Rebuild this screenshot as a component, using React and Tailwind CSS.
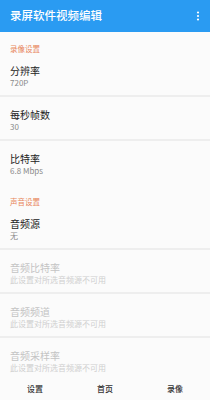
import React from "react";

const font = { fontFamily: '"Noto Sans CJK SC", "Noto Sans", sans-serif' };

function Item({ title, sub, disabled, divider = true }) {
  return (
    <div className={`h-[44px] shrink-0 px-[10px] pt-[11px] ${divider ? "border-b-2 border-[#eeeeee]" : ""}`}>
      <div className={`text-[10px] leading-[14px] ${disabled ? "text-[#c4c4c4]" : "text-[#222222]"}`}>{title}</div>
      <div className={`text-[8px] leading-[10px] ${disabled ? "text-[#cfcfcf]" : "text-[#8a8a8a]"}`}>{sub}</div>
    </div>
  );
}

function Section({ title }) {
  return (
    <div className="h-[21px] shrink-0 px-[10px] pt-[12px] text-[7.5px] leading-[10px] text-[#e8865c]">{title}</div>
  );
}

export default function App() {
  return (
    <div className="w-[210px] h-[400px] flex flex-col bg-[#fbfbfb] overflow-hidden" style={font}>
      <div className="h-[32px] shrink-0 bg-[#2a9bf2] flex items-center justify-between pl-[10px] pr-[10px]">
        <span className="text-white text-[11.5px] font-medium leading-none">录屏软件视频编辑</span>
        <svg width="4" height="10" viewBox="0 0 4 10">
          <circle cx="2" cy="1.5" r="1.1" fill="white" />
          <circle cx="2" cy="5" r="1.1" fill="white" />
          <circle cx="2" cy="8.5" r="1.1" fill="white" />
        </svg>
      </div>
      <div className="flex-1 min-h-0 flex flex-col overflow-hidden">
        <Section title="录像设置" />
        <Item title="分辨率" sub="720P" />
        <Item title="每秒帧数" sub="30" />
        <Item title="比特率" sub="6.8 Mbps" divider={false} />
        <Section title="声音设置" />
        <Item title="音频源" sub="无" />
        <Item title="音频比特率" sub="此设置对所选音频源不可用" disabled />
        <Item title="音频频道" sub="此设置对所选音频源不可用" disabled />
        <Item title="音频采样率" sub="此设置对所选音频源不可用" disabled divider={false} />
      </div>
      <div className="h-[24px] shrink-0 grid grid-cols-3 bg-[#fbfbfb] text-[8px] font-medium text-[#333333]">
        <div className="flex items-center justify-center pt-[2px]">设置</div>
        <div className="flex items-center justify-center pt-[2px]">首页</div>
        <div className="flex items-center justify-center pt-[2px]">录像</div>
      </div>
    </div>
  );
}
